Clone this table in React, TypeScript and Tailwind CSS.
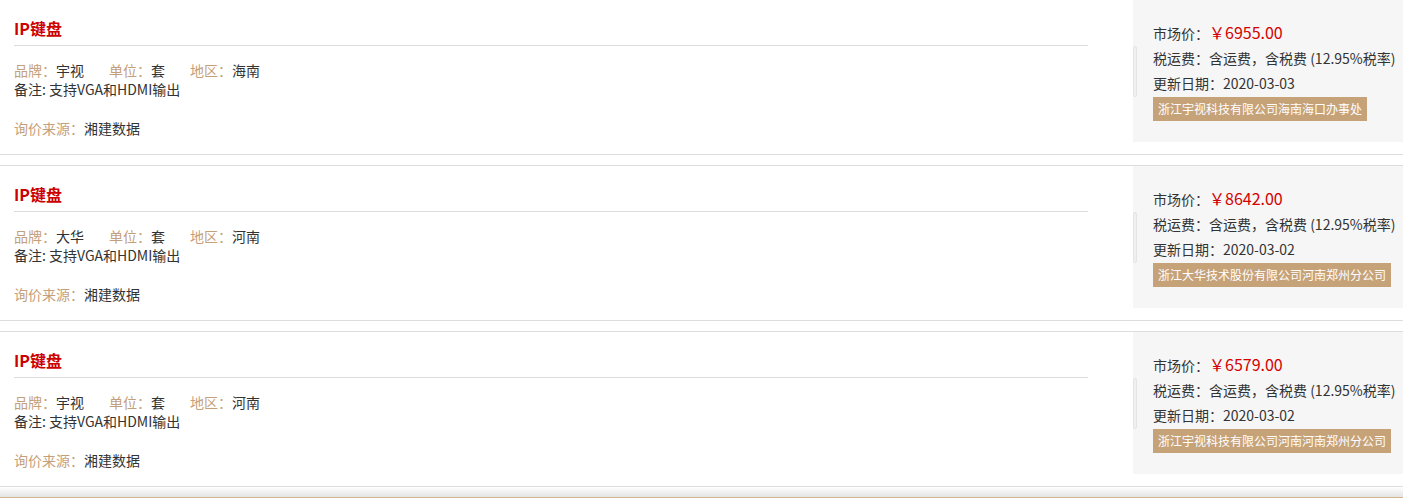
import React from "react";

type Item = {
  brand: string;
  region: string;
  price: string;
  date: string;
  company: string;
};

const items: Item[] = [
  { brand: "宇视", region: "海南", price: "6955.00", date: "2020-03-03", company: "浙江宇视科技有限公司海南海口办事处" },
  { brand: "大华", region: "河南", price: "8642.00", date: "2020-03-02", company: "浙江大华技术股份有限公司河南郑州分公司" },
  { brand: "宇视", region: "河南", price: "6579.00", date: "2020-03-02", company: "浙江宇视科技有限公司河南河南郑州分公司" },
];

const font = { fontFamily: '"Microsoft YaHei", "Noto Sans CJK SC", "Noto Sans", sans-serif' };

function Row({ item, first }: { item: Item; first: boolean }) {
  return (
    <div className={`flex border-b border-[#dddddd] ${first ? "h-[155px]" : "mt-[10px] h-[156px] border-t"}`}>
      <div className="w-[1088px] shrink-0 pl-[14px]">
        <div className="pt-[16px] pb-[5px] leading-[24px] border-b border-[#dddddd] text-[16px] font-bold text-[#cc0000]">
          IP键盘
        </div>
        <div className="mt-[15px] flex text-[14px] leading-[19px]">
          <span className="w-[95px]">
            <span className="text-[#c4a07a]">品牌：</span>
            <span className="text-[#333333]">{item.brand}</span>
          </span>
          <span className="w-[81px]">
            <span className="text-[#c4a07a]">单位：</span>
            <span className="text-[#333333]">套</span>
          </span>
          <span>
            <span className="text-[#c4a07a]">地区：</span>
            <span className="text-[#333333]">{item.region}</span>
          </span>
        </div>
        <div className="text-[14px] leading-[19px] text-[#333333]">备注: 支持VGA和HDMI输出</div>
        <div className="mt-[20px] text-[14px] leading-[19px]">
          <span className="text-[#c4a07a]">询价来源：</span>
          <span className="text-[#333333]">湘建数据</span>
        </div>
      </div>
      <div className="ml-[45px] flex h-[142px] flex-1 bg-[#f6f6f6]">
        <div className="mt-[46px] h-[51px] w-[4px] rounded-[2px] border border-[#e4e4e4] bg-[#f0f0f0]" />
        <div className="pl-[16px] pt-[20px] text-[14px] text-[#333333]">
          <div className="leading-[25px]">
            市场价：<span className="text-[16px] text-[#d40000]">￥{item.price}</span>
          </div>
          <div className="leading-[25px]">税运费：含运费，含税费 (12.95%税率)</div>
          <div className="leading-[25px]">更新日期：{item.date}</div>
          <div className="mt-[1px] inline-block bg-[#c6a279] px-[5px] text-[12px] leading-[24px] text-white">
            {item.company}
          </div>
        </div>
      </div>
    </div>
  );
}

export default function App() {
  return (
    <div className="h-[498px] w-[1403px] overflow-hidden bg-white" style={font}>
      {items.map((it, i) => (
        <Row key={i} item={it} first={i === 0} />
      ))}
      <div className="h-[11px] border-b border-[#d6b68e] bg-gradient-to-b from-white to-[#e4e4e4]" />
    </div>
  );
}
